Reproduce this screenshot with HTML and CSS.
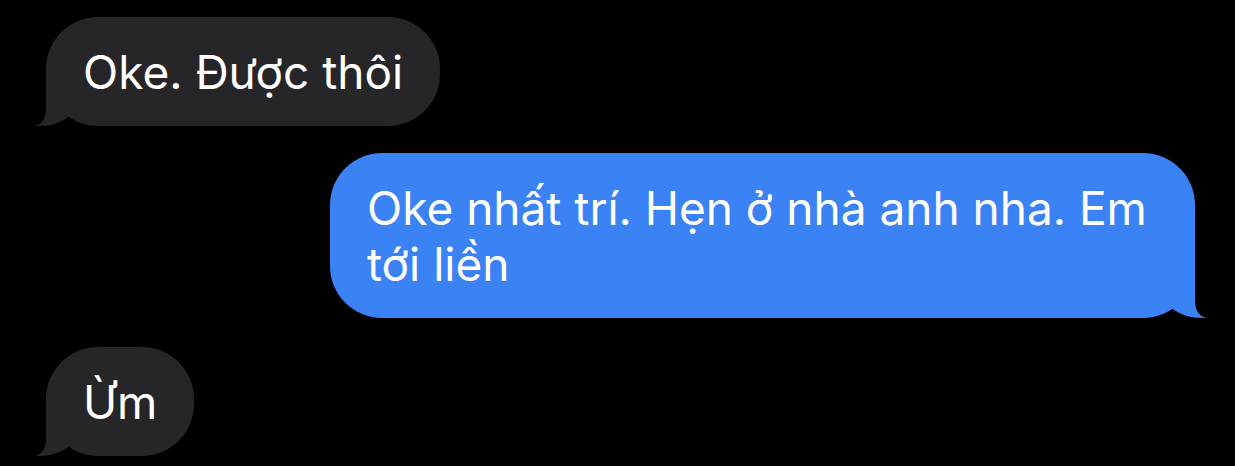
FILE: index.html
```html
<!DOCTYPE html>
<html lang="vi">
<head>
<meta charset="utf-8">
<link rel="stylesheet" href="styles.css">
</head>
<body>
<div class="thread">
  <div class="bubble in">
    <span class="text">Oke. Được thôi</span>
    <svg class="tail" viewBox="0 0 46 62" width="46" height="62"><path d="M11 0 L11 42 Q11 57 0 60 Q21 61 35 50 L45 34 L45 0 Z"/></svg>
  </div>
  <div class="bubble out">
    <span class="text">Oke nhất trí. Hẹn ở nhà anh nha. Em tới liền</span>
    <svg class="tail" viewBox="0 0 46 62" width="46" height="62"><path d="M11 0 L11 42 Q11 57 0 60 Q21 61 35 50 L45 34 L45 0 Z"/></svg>
  </div>
  <div class="bubble in">
    <span class="text">Ừm</span>
    <svg class="tail" viewBox="0 0 46 62" width="46" height="62"><path d="M11 0 L11 42 Q11 57 0 60 Q21 61 35 50 L45 34 L45 0 Z"/></svg>
  </div>
</div>
</body>
</html>
```
FILE: styles.css
```css
html, body {
  margin: 0;
  background: #000;
}
body {
  font-family: Inter, "Noto Sans", "Liberation Sans", sans-serif;
  color: #fff;
}
.thread {
  display: flex;
  flex-direction: column;
  align-items: flex-start;
  padding: 17px 40px 0 46px;
}
.bubble {
  position: relative;
  box-sizing: border-box;
  border-radius: 52px;
  padding: 26.5px 37px;
  font-size: 46px;
  line-height: 56px;
  max-width: 865px;
}
.bubble .text {
  position: relative;
  z-index: 1;
}
.in {
  background: #262628;
}
.in .tail {
  fill: #262628;
}
.out {
  background: #3b82f5;
  align-self: flex-end;
  margin-top: 27px;
  margin-bottom: 29px;
}
.out .tail {
  fill: #3b82f5;
}
.tail {
  position: absolute;
  left: -11px;
  bottom: -2px;
}
.out .tail {
  left: auto;
  right: -11px;
  transform: scaleX(-1);
}
```
